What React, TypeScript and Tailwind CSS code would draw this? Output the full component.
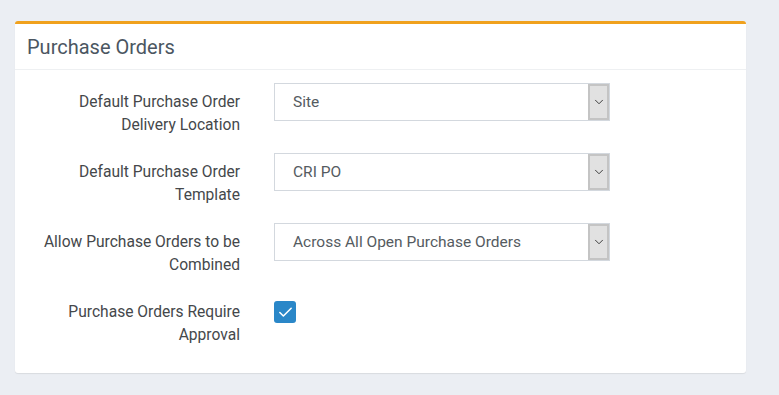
import { Check, ChevronDown } from 'lucide-react';

interface SelectRowProps {
  label: string[];
  value: string;
}

function SelectRow({ label, value }: SelectRowProps) {
  return (
    <div className="flex items-start">
      <div className="w-[225px] pt-[8px] text-right text-[15.6px] leading-[23px] text-[#45484b]">
        {label.map((line, i) => (
          <div key={i}>{line}</div>
        ))}
      </div>
      <div className="ml-[34px] flex h-[38px] w-[336px] border border-[#d3d8de] bg-white">
        <div className="flex-1 pl-[18px] text-[15.5px] leading-[36px] text-[#555b61]">{value}</div>
        <div className="flex w-[21px] items-center justify-center border-2 border-[#c4c4c4] bg-[#e1e1e1]">
          <ChevronDown size={14} strokeWidth={1.6} className="text-[#333]" />
        </div>
      </div>
    </div>
  );
}

export default function App() {
  return (
    <div className="min-h-[395px] w-full bg-[#ebeef3] px-[15px] pt-[21px] font-['Roboto',sans-serif]">
      <div className="w-[731px] rounded-[3px] border-t-[3px] border-[#f0a11d] bg-white shadow-[0_1px_1px_rgba(0,0,0,0.08)]">
        <div className="flex h-[46px] items-center border-b border-[#eef0f2] px-[12px]">
          <h2 className="text-[20px] font-normal text-[#4b5661]">Purchase Orders</h2>
        </div>
        <div className="flex flex-col gap-[16px] pb-[26px] pt-[13px]">
          <SelectRow label={['Default Purchase Order', 'Delivery Location']} value="Site" />
          <SelectRow label={['Default Purchase Order', 'Template']} value="CRI PO" />
          <SelectRow label={['Allow Purchase Orders to be', 'Combined']} value="Across All Open Purchase Orders" />
          <div className="flex items-start">
            <div className="w-[225px] pt-[8px] text-right text-[15.6px] leading-[23px] text-[#45484b]">
              <div>Purchase Orders Require</div>
              <div>Approval</div>
            </div>
            <div className="ml-[34px] mt-[8px] flex h-[22px] w-[22px] items-center justify-center rounded-[3px] bg-[#2a87c8]">
              <Check size={17} strokeWidth={2.2} className="text-white" />
            </div>
          </div>
        </div>
      </div>
    </div>
  );
}
